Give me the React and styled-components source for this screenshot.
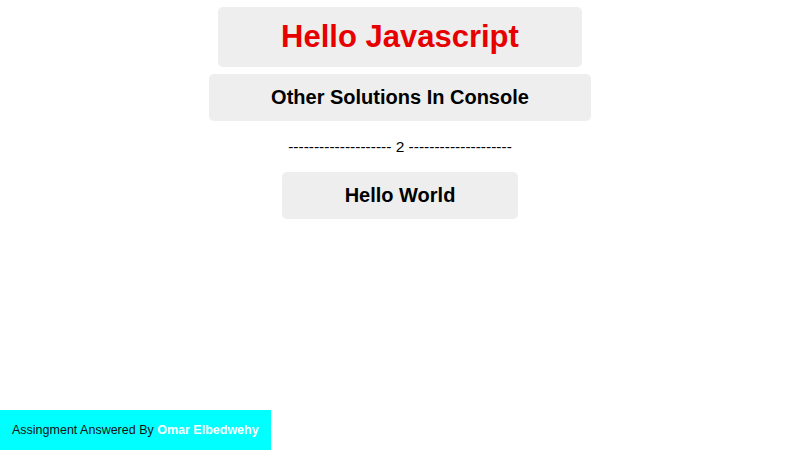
import React from "react";
import styled, { createGlobalStyle } from "styled-components";

const Global = createGlobalStyle`
  html, body { margin: 0; padding: 0; background: #fff; }
  body { font-family: "Liberation Sans", Arial, sans-serif; }
`;

const Page = styled.div`
  display: flex;
  flex-direction: column;
  align-items: center;
  padding-top: 7px;
  height: 450px;
  box-sizing: border-box;
`;

const Box = styled.div`
  background: #eeeeee;
  border-radius: 5px;
  padding: 0 ${(p) => p.$px || 62}px;
  height: ${(p) => p.$h}px;
  display: flex;
  align-items: center;
  justify-content: center;
  font-weight: bold;
  font-size: ${(p) => p.$size}px;
  color: ${(p) => p.$color || "#000"};
  margin-top: ${(p) => p.$mt || 0}px;
  white-space: nowrap;
`;

const Divider = styled.div`
  font-size: 15.5px;
  color: #000;
  margin-top: 16px;
  height: 20px;
  line-height: 20px;
`;

const Footer = styled.div`
  position: fixed;
  left: 0;
  bottom: 0;
  width: 271px;
  height: 40px;
  background: #00ffff;
  display: flex;
  align-items: center;
  padding-left: 12px;
  box-sizing: border-box;
  font-size: 12.5px;
  color: #111;
  white-space: pre;
`;

const Name = styled.span`
  color: #fff;
  font-weight: bold;
`;

export default function App() {
  return (
    <>
      <Global />
      <Page>
        <Box $h={60} $size={31} $px={63} $color="#e60000">Hello Javascript</Box>
        <Box $h={47} $size={20} $mt={7}>Other Solutions In Console</Box>
        <Divider>{"-------------------- 2 --------------------"}</Divider>
        <Box $h={47} $size={20} $px={63} $mt={15}>Hello World</Box>
      </Page>
      <Footer>
        {"Assingment Answered By "}<Name>Omar Elbedwehy</Name>
      </Footer>
    </>
  );
}
